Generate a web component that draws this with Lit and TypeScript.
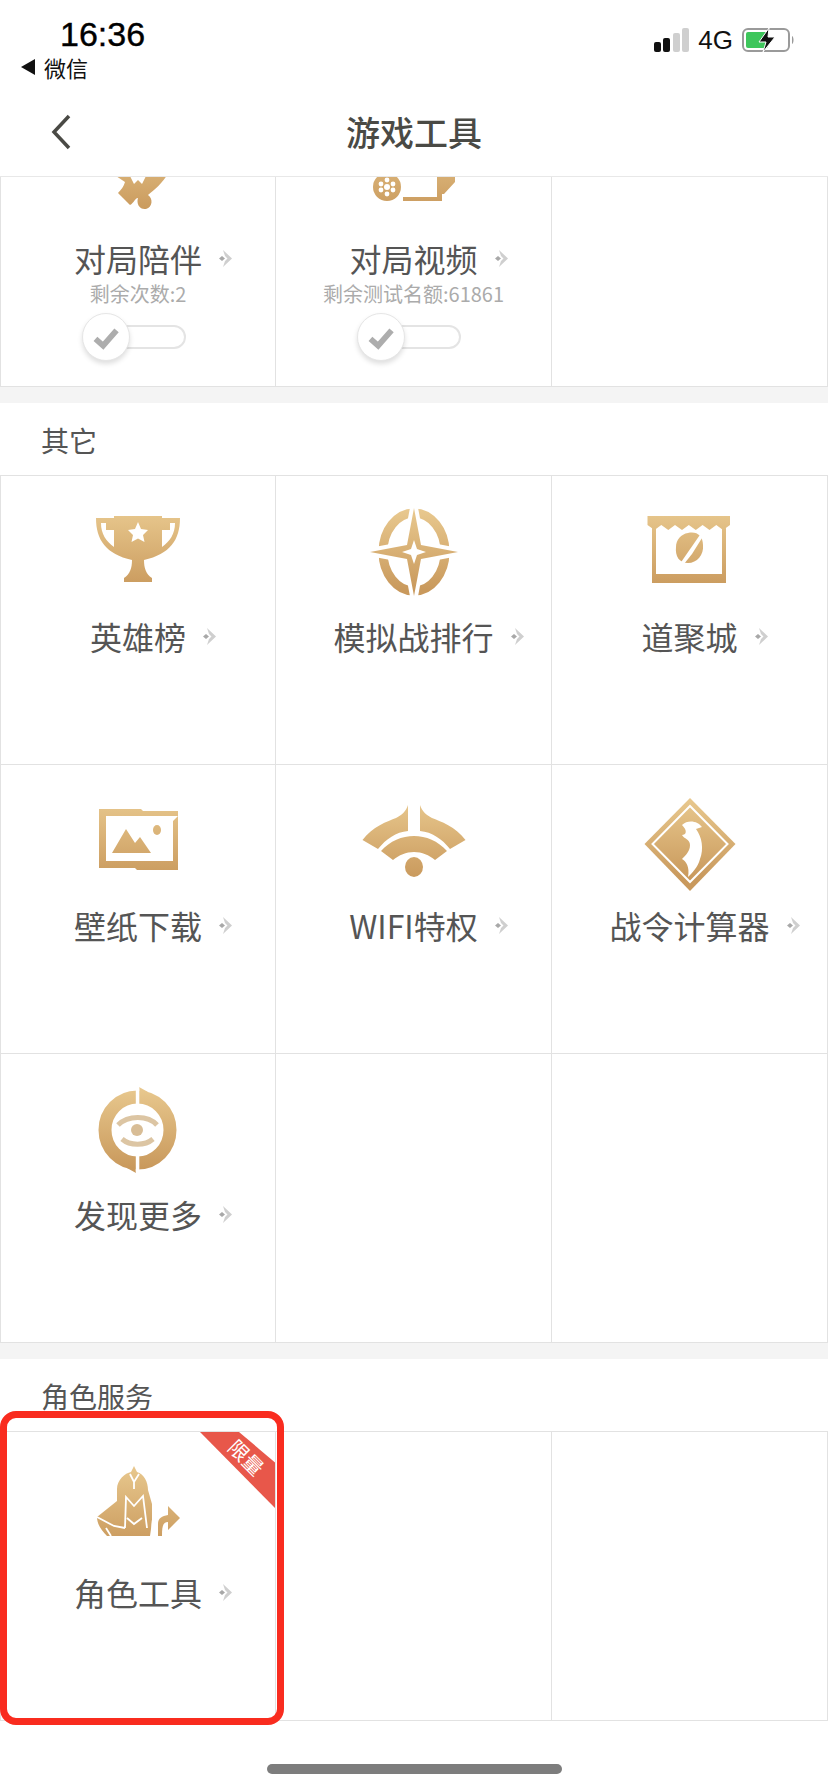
import { LitElement, html, css, svg } from "lit";
import { customElement } from "lit/decorators.js";

const G = "url(#gold)";
const mirror = (d: string) => svg`<path fill=${G} d=${d}/><path fill=${G} transform="matrix(-1 0 0 1 100 0)" d=${d}/>`;

const icons: Record<string, unknown> = {
  puzzle: svg`<path fill=${G} d="M22 50L37 60C36 64 33 68 30 71L42 83C46 81 47 76 50 76C48 82 52 88 58 87C65 85 65 76 60 73C66 68 74 62 81 50Z"/>
    <path fill="#fff" d="M40 50L46 62L50 58L54 62L60 50Z"/>`,
  video: svg`<circle cx="23" cy="65" r="14" fill=${G}/>
    <g fill="#fff"><circle cx="23" cy="65" r="3"/><circle cx="23" cy="58" r="2.4"/><circle cx="23" cy="72" r="2.4"/><circle cx="17" cy="62" r="2.4"/><circle cx="29" cy="62" r="2.4"/><circle cx="17" cy="68" r="2.4"/><circle cx="29" cy="68" r="2.4"/></g>
    <path fill=${G} d="M39 75H73V55H78V79H39ZM78 55H91V60L80 72H78Z"/>`,
  trophy: svg`<path fill=${G} d="M8 18H26V16H74V18H92C92 40 82 54 56 60C56 68 58 74 64 78V82H36V78C42 74 44 68 44 60C18 54 8 40 8 18Z"/>
    <path fill="#fff" d="M13 23H18V30H26V47C18 41 13 34 13 23ZM87 23H82V30H74V47C82 41 87 34 87 23Z"/>
    <path fill="#fff" d="M50 22L53 29L60 30L55 35L56.5 42L50 38.5L43.5 42L45 35L40 30L47 29Z"/>`,
  compass: svg`<ellipse cx="50" cy="52" rx="31" ry="39" fill="none" stroke=${G} stroke-width="9"/>
    <path fill="#fff" stroke="#fff" stroke-width="8" d="M50 8L57 45L94 52L57 59L50 96L43 59L6 52L43 45Z"/>
    <path fill=${G} d="M50 8L57 45L94 52L57 59L50 96L43 59L6 52L43 45Z"/>
    <path fill="#fff" d="M50 40L53 49L62 52L53 55L50 64L47 55L38 52L47 49Z"/>`,
  shop: svg`<path fill=${G} d="M7.5 16H90V25L83 30L76.300 25L69.500 30L62.600 25L55.800 30L48.800 25L42 30L35 25L28.300 30L21.300 25L14.500 30L7.500 25Z"/>
    <path fill=${G} d="M12 28L16 28.500V74H82V28.500L86 28V83H12Z"/>
    <path fill=${G} d="M48 33C57 31 63 36 63 45C64 55 57 63 48 63C39 63 35 56 36 47C36 40 41 34 48 33Z"/>
    <path fill="#fff" d="M64 29L37 68L40 69L52 54L67 30Z"/>`,
  image: svg`<path fill=${G} d="M11 20H53L55 22H90V81H49L47 79H11Z"/>
    <path fill="#fff" d="M18 27H90L85 32V72H18Z"/>
    <path fill=${G} d="M24 64L38 40L47 54L52 48L63 64Z"/><ellipse cx="69" cy="41" rx="4" ry="5" fill=${G}/>`,
  wifi: svg`${mirror("M44 16V42C32 43 22 50 14 60L-1.500 51C8 38 24 32 32 29C38 26 42 22 44 16Z")}
    <path fill=${G} d="M17 62C26 52 38 47 50 47C62 47 74 52 83 62L71 71C65 66 58 63 50 63C42 63 35 66 29 71Z"/>
    <ellipse cx="50" cy="78" rx="9" ry="10" fill=${G}/>`,
  diamond: svg`<path fill=${G} d="M50 9L95.500 55L50 102L4.500 55Z"/>
    <path fill="none" stroke="#fff" stroke-width="2" d="M50 17L87.500 55L50 93L12.500 55Z"/>
    <path fill="#fff" d="M42 36C48 30 58 32 62 38L56 40C62 48 64 60 60 70C58 78 52 84 48 88C50 78 46 72 42 70C46 66 50 62 50 56C50 50 44 50 42 46C46 46 48 42 42 36Z"/>`,
  eye: svg`<ellipse cx="49.500" cy="52" rx="32.500" ry="33" fill="none" stroke=${G} stroke-width="13"/>
    <path fill=${G} d="M51 9L60 14L52 20ZM48 95L39 90L47 84Z"/>
    <rect x="47.800" y="5" width="3.500" height="94" fill="#fff"/>
    <path fill="none" stroke="#dcc5a3" stroke-width="5" d="M30 47C40 37 60 37 69 47M34 61C42 68 57 68 65 61"/>
    <circle cx="49" cy="52" r="6" fill="#d8bd96"/>`,
  role: svg`<path fill=${G} d="M46 10L49 16C56 18 60 26 60 34L64 48V66L62 80H19C13 74 9 68 9 61L29 45V33C29 24 37 17 43 16Z"/>
    <path fill="none" stroke="#fff" stroke-width="1.800" d="M42 18L46 26L51 18M46 26V33M37 72L38 41L46 50L55 40L59 72M39 62L46 68L54 62M9 61L26 70L37 72M18 72L23 80"/>
    <path fill="none" stroke="#fff" stroke-width="5" d="M66 80V68C66 60 71 56 78 56"/>
    <path fill=${G} d="M70 80V68C70 62 74 60 80 59V50L92 62L80 74V66C75 66 74 70 74 80Z"/>`,
};

const iconEl = (name: string) =>
  svg`<svg class="icon" viewBox="0 0 100 100">${icons[name]}</svg>`;

const arrow = html`<svg class="arrow" viewBox="0 0 13 17">
  <path fill="#cfcfcf" d="M4 0L13 8.500L4 17L6 11L8.500 8.500L6 6Z"/>
  <path fill="#a8a8a8" d="M3 6L6 8.500L3 11L0 8.500Z"/>
</svg>`;

const toggle = html`<div class="toggle">
  <div class="knob"><svg viewBox="0 0 48 48"><path d="M13 26L21 33L35 17" fill="none" stroke="#adadad" stroke-width="6"/></svg></div>
  <div class="track"></div>
</div>`;

interface Cell { icon?: string; label?: string; sub?: string; toggle?: boolean; ribbon?: boolean }

const first: Cell[] = [
  { icon: "puzzle", label: "对局陪伴", sub: "剩余次数:2", toggle: true },
  { icon: "video", label: "对局视频", sub: "剩余测试名额:61861", toggle: true },
  {},
];
const others: Cell[] = [
  { icon: "trophy", label: "英雄榜" },
  { icon: "compass", label: "模拟战排行" },
  { icon: "shop", label: "道聚城" },
  { icon: "image", label: "壁纸下载" },
  { icon: "wifi", label: "WIFI特权" },
  { icon: "diamond", label: "战令计算器" },
  { icon: "eye", label: "发现更多" },
  {},
  {},
];
const roles: Cell[] = [{ icon: "role", label: "角色工具", ribbon: true }, {}, {}];

@customElement("app-root")
export class AppRoot extends LitElement {
  static styles = css`
    :host { display: block; width: 828px; height: 1792px; position: relative; overflow: hidden; background: #fff;
      font-family: "Noto Sans CJK SC", "Liberation Sans", sans-serif; color: #555; }
    .defs { position: absolute; width: 0; height: 0; }
    .head { position: relative; z-index: 2; background: #fff; height: 177px; border-bottom: 1px solid #e8e8e8; box-sizing: border-box; }
    .status { height: 88px; display: flex; justify-content: space-between; color: #000; }
    .left { padding: 15px 0 0 21px; }
    .time { font: 500 34px/38px "Liberation Sans", sans-serif; margin-left: 39px; -webkit-text-stroke: 0.4px #000; }
    .back-app { display: flex; align-items: center; gap: 9px; font-size: 22px; line-height: 28px; height: 28px; color: #111; }
    .back-app svg { width: 14px; height: 16px; }
    .right { display: flex; align-items: center; padding: 18px 33px 0 0; height: 44px; }
    .bars { display: flex; align-items: flex-end; gap: 2.600px; height: 24px; }
    .bars i { width: 7px; border-radius: 2px; background: #cfcfcf; }
    .bars i:nth-child(1) { height: 10px; background: #111; }
    .bars i:nth-child(2) { height: 14px; background: #111; }
    .bars i:nth-child(3) { height: 19px; }
    .bars i:nth-child(4) { height: 24px; }
    .net { font: 26px/30px "Liberation Sans", sans-serif; margin: 0 9px; color: #111; }
    .batt { width: 53px; height: 26px; }
    .nav { height: 88px; display: flex; align-items: center; justify-content: center; position: relative; }
    .nav svg { position: absolute; left: 50px; top: 26px; width: 22px; height: 36px; }
    .title { font-size: 34px; font-weight: 500; color: #4a4a45; line-height: 44px; }
    .content { margin-top: -79px; }
    .grid { display: grid; grid-template-columns: repeat(3, 276px); }
    .cell { position: relative; height: 289px; box-sizing: border-box; border-right: 1px solid #e2e2e2; border-bottom: 1px solid #e2e2e2; display: flex; flex-direction: column; align-items: center; padding-top: 24px; }
    .cell:nth-child(3n+1) { border-left: 1px solid #e2e2e2; }
    .bordered { border-top: 1px solid #e2e2e2; margin-top: -1px; }
    .icon { width: 100px; height: 100px; overflow: visible; flex: none; }
    .label { position: relative; font-size: 32px; line-height: 44px; margin-top: 14px; white-space: nowrap; color: #555; }
    .arrow { position: absolute; left: 100%; top: 14px; margin-left: 17px; width: 13px; height: 17px; }
    .sub { font-size: 20px; line-height: 28px; color: #ababab; white-space: nowrap; }
    .toggle { align-self: flex-start; margin: 5px 0 0 81px; display: flex; align-items: center; width: 104px; }
    .knob { width: 48px; height: 48px; border-radius: 50%; background: #fff; box-sizing: border-box; border: 1px solid #e6e6e6; box-shadow: 0 3px 5px rgba(0,0,0,.13); z-index: 1; flex: none; }
    .knob svg { display: block; width: 46px; height: 46px; }
    .track { flex: 1; margin-left: -24px; height: 24px; box-sizing: border-box; border: 2px solid #e4e4e4; border-radius: 12px; background: #fff; }
    .gap { height: 16px; background: #f4f4f4; }
    .sec { height: 73px; box-sizing: border-box; padding: 0 0 0 41px; display: flex; align-items: center; font-size: 28px; color: #555; background: #fff; }
    .ribbon { position: absolute; top: 0; right: 0; width: 75px; height: 76px; }
    .ribbon::before { content: ""; position: absolute; inset: 0; background: #e8574a; clip-path: polygon(0 0, 52% 0, 100% 40%, 100% 100%); }
    .ribbon span { position: absolute; left: 26px; top: 12px; width: 42px; font-size: 20px; line-height: 28px; color: #fff; transform: rotate(45deg); white-space: nowrap; }
    .mark { position: absolute; z-index: 3; left: 0; top: 1411px; width: 284px; height: 314px; box-sizing: border-box; border: 7px solid #f92c1f; border-radius: 16px; }
    .home { position: absolute; left: 267px; top: 1764px; width: 295px; height: 10px; border-radius: 5px; background: #7d7d7d; }
  `;

  private cell(c: Cell) {
    return html`<div class="cell">
      ${c.icon ? iconEl(c.icon) : ""}
      ${c.label ? html`<div class="label">${c.label}${arrow}</div>` : ""}
      ${c.sub ? html`<div class="sub">${c.sub}</div>` : ""}
      ${c.toggle ? toggle : ""}
      ${c.ribbon ? html`<div class="ribbon"><span>限量</span></div>` : ""}
    </div>`;
  }

  render() {
    return html`
      <svg class="defs"><defs>
        <linearGradient id="gold" gradientUnits="userSpaceOnUse" x1="0" y1="10" x2="0" y2="90">
          <stop offset="0" stop-color="#e8c88e"/><stop offset="1" stop-color="#c9995c"/>
        </linearGradient>
      </defs></svg>
      <div class="head">
        <div class="status">
          <div class="left">
            <div class="time">16:36</div>
            <div class="back-app"><svg viewBox="0 0 14 16"><path d="M14 0V16L0 8Z" fill="#111"/></svg><span>微信</span></div>
          </div>
          <div class="right">
            <div class="bars"><i></i><i></i><i></i><i></i></div>
            <div class="net">4G</div>
            <svg class="batt" viewBox="0 0 53 26">
              <rect x="1" y="2" width="46" height="22" rx="5" fill="none" stroke="#9a9a9a" stroke-width="2"/>
              <rect x="4" y="5" width="22" height="16" rx="2" fill="#3ec65c"/>
              <path d="M50 9C52 10 52 16 50 17Z" fill="#9a9a9a"/>
              <path d="M27 1L17 15H24L21 25L33 10H26Z" fill="#111" stroke="#fff" stroke-width="1"/>
            </svg>
          </div>
        </div>
        <div class="nav">
          <svg viewBox="0 0 22 36"><path d="M19 2L4 18L19 34" fill="none" stroke="#4a4a45" stroke-width="3.500"/></svg>
          <div class="title">游戏工具</div>
        </div>
      </div>
      <div class="content">
        <div class="grid">${first.map((c) => this.cell(c))}</div>
        <div class="gap"></div>
        <div class="sec">其它</div>
        <div class="grid bordered">${others.map((c) => this.cell(c))}</div>
        <div class="gap"></div>
        <div class="sec">角色服务</div>
        <div class="grid bordered">${roles.map((c) => this.cell(c))}</div>
      </div>
      <div class="mark"></div>
      <div class="home"></div>
    `;
  }
}
